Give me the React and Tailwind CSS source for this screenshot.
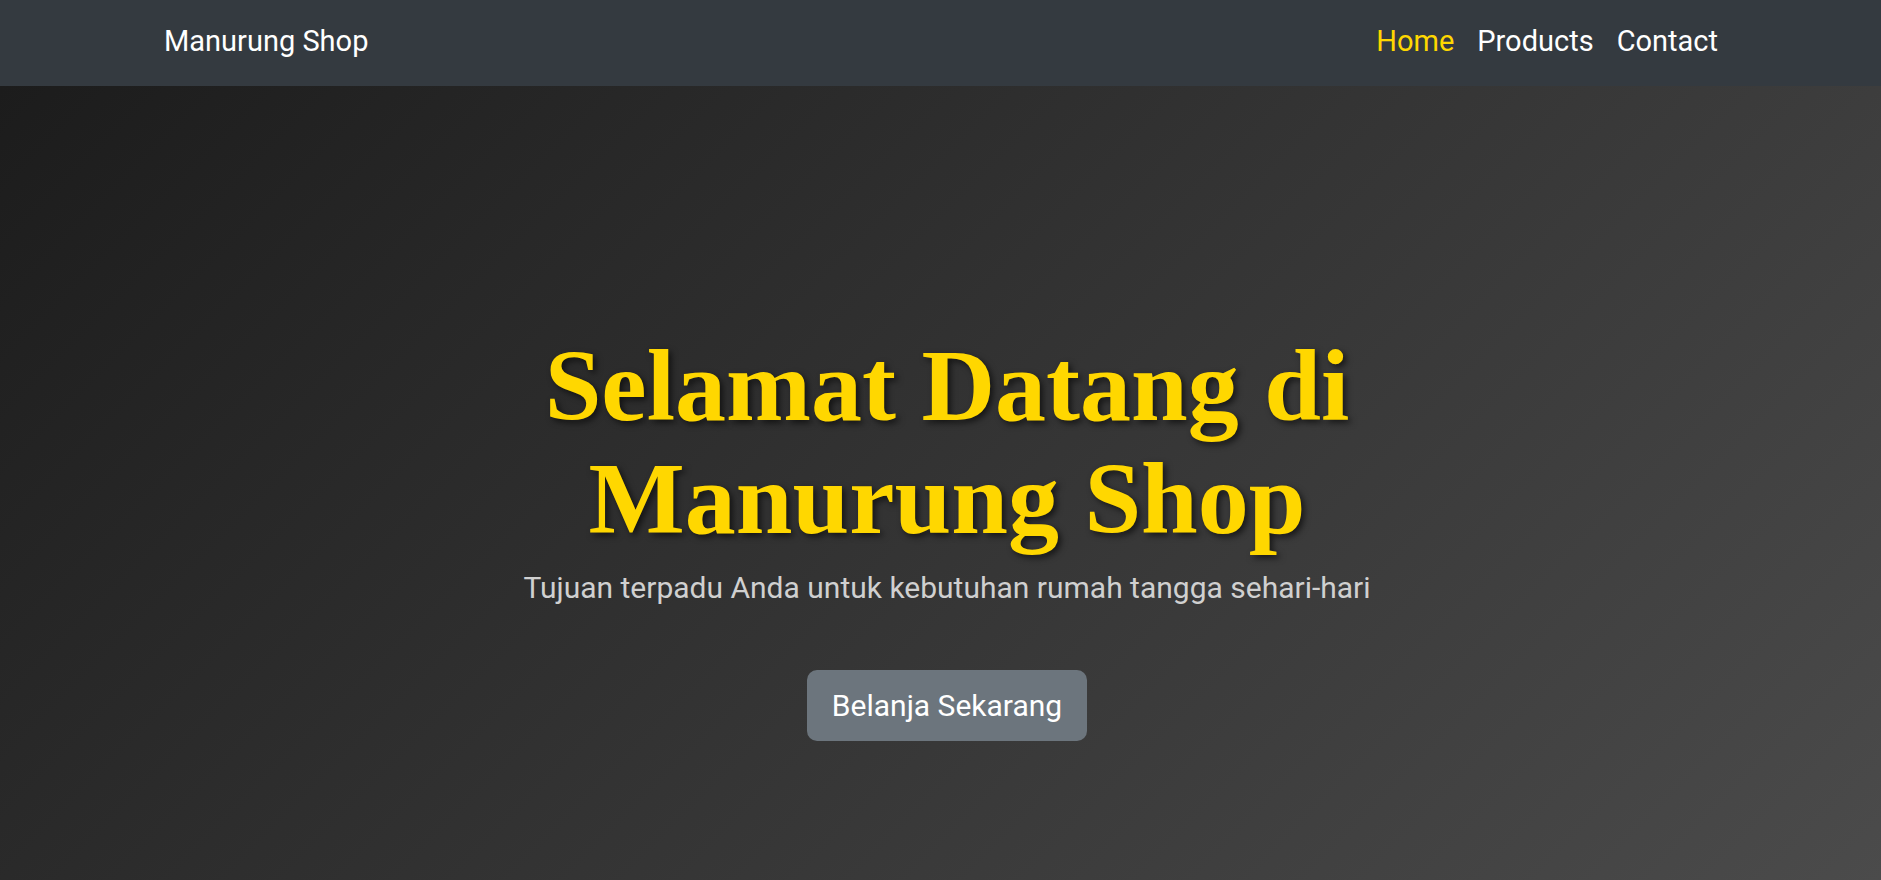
import React from 'react';

const NAV_LINKS = [
  { label: 'Home', active: true },
  { label: 'Products' },
  { label: 'Contact' },
];

const Navbar = () => (
  <nav className="h-[86px] bg-[#343a40] flex items-center justify-between pl-[164px] pr-[163px] pb-[4px]">
    <a href="#" className="text-[29px] leading-[43px] text-white">
      Manurung Shop
    </a>
    <ul className="flex items-center gap-[23px]">
      {NAV_LINKS.map((link) => (
        <li key={link.label}>
          <a
            href="#"
            className={
              link.active
                ? 'text-[29px] leading-[43px] text-[#ffd700]'
                : 'text-[29px] leading-[43px] text-white'
            }
          >
            {link.label}
          </a>
        </li>
      ))}
    </ul>
  </nav>
);

const Hero = () => (
  <section className="h-[794px] bg-[linear-gradient(135deg,#1c1c1c_0%,#4b4b4b_100%)] flex flex-col items-center pt-[243px] pl-[13px]">
    <h1 className="font-['Liberation_Serif',serif] font-bold text-[102px] leading-[113px] text-[#ffd700] text-center [text-shadow:3px_3px_6px_rgba(0,0,0,0.6)]">
      Selamat Datang di
      <br />
      Manurung Shop
    </h1>
    <p className="mt-[11px] text-[30px] leading-[43px] text-[#d0d0d0]">
      Tujuan terpadu Anda untuk kebutuhan rumah tangga sehari-hari
    </p>
    <a
      href="#"
      className="mt-[61px] w-[280px] h-[71px] flex items-center justify-center rounded-[10px] bg-[#6c757d] text-white text-[30px]"
    >
      Belanja Sekarang
    </a>
  </section>
);

export default function App() {
  return (
    <div className="font-['Roboto',sans-serif] min-h-screen">
      <Navbar />
      <Hero />
    </div>
  );
}
